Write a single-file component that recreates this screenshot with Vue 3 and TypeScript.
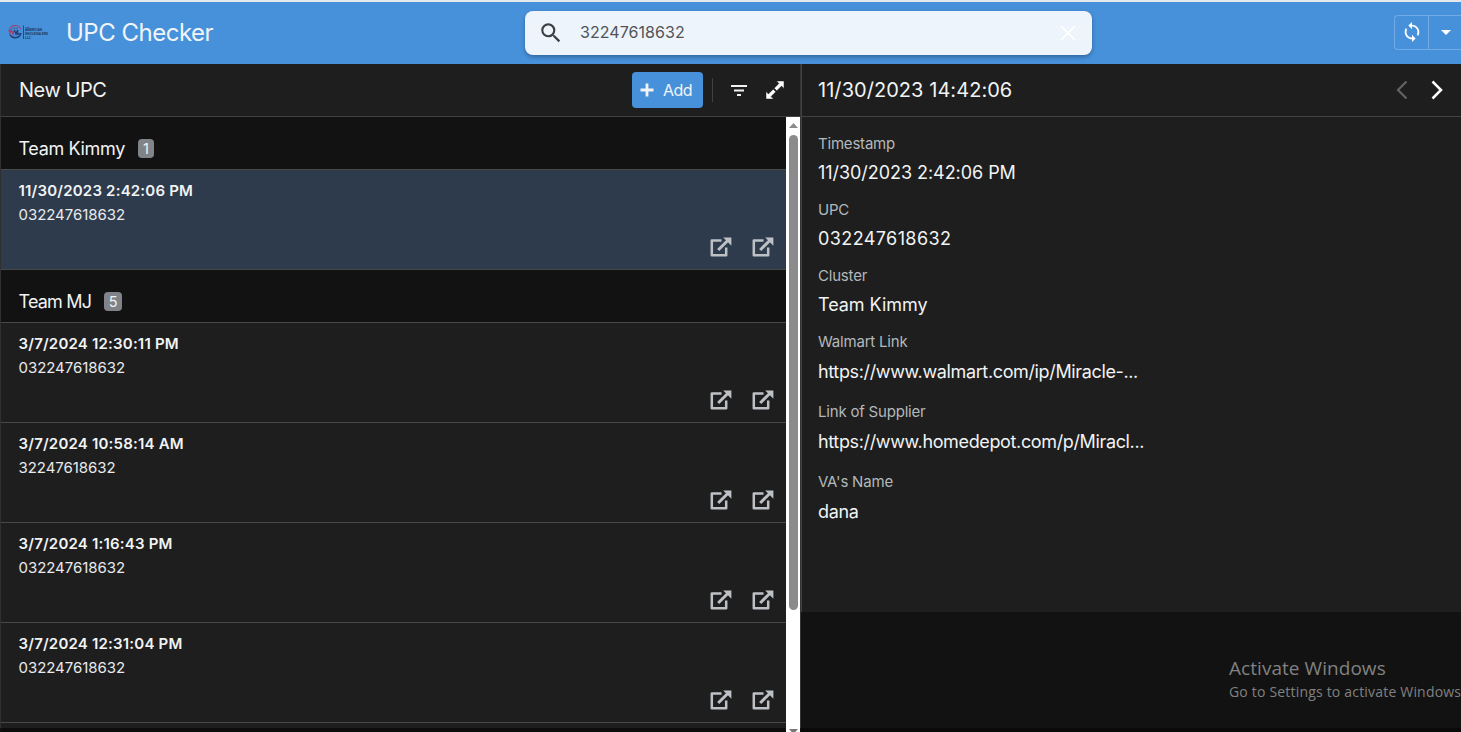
<script setup lang="ts">
interface Row { date: string; upc: string; selected?: boolean }
interface Group { name: string; count: number; tracking: number; rows: Row[] }
interface Field { label: string; value: string; kind: string }

const groups: Group[] = [
  {
    name: 'Team Kimmy',
    count: 1,
    tracking: -0.35,
    rows: [{ date: '11/30/2023 2:42:06 PM', upc: '032247618632', selected: true }],
  },
  {
    name: 'Team MJ',
    count: 5,
    tracking: -0.8,
    rows: [
      { date: '3/7/2024 12:30:11 PM', upc: '032247618632' },
      { date: '3/7/2024 10:58:14 AM', upc: '32247618632' },
      { date: '3/7/2024 1:16:43 PM', upc: '032247618632' },
      { date: '3/7/2024 12:31:04 PM', upc: '032247618632' },
      { date: '', upc: '' },
    ],
  },
]

const fields: Field[] = [
  { label: 'Timestamp', value: '11/30/2023 2:42:06 PM', kind: 'plain' },
  { label: 'UPC', value: '032247618632', kind: 'number' },
  { label: 'Cluster', value: 'Team Kimmy', kind: 'plain' },
  { label: 'Walmart Link', value: 'https://www.walmart.com/ip/Miracle-...', kind: 'link' },
  { label: 'Link of Supplier', value: 'https://www.homedepot.com/p/Miracl...', kind: 'link' },
  { label: "VA's Name", value: 'dana', kind: 'link' },
]
</script>

<template>
  <div class="app">
    <header class="topbar">
      <svg class="logo" width="42" height="18" viewBox="0 0 42 18">
        <path d="M1.2 9A6 6 0 0 1 12.8 6.4" fill="none" stroke="#a83a6c" stroke-width="1.2" />
        <path d="M1.8 11.5A6 6 0 0 0 13 10" fill="none" stroke="#1f3c72" stroke-width="1.3" />
        <path d="M1.5 11 3.3 7 5 11 6.4 7" fill="none" stroke="#a43b70" stroke-width="1.4" />
        <path d="M6.4 7 8 11 9.6 7V11H12.6" fill="none" stroke="#244079" stroke-width="1.4" />
        <path d="M4.5 5.2H10" stroke="#315f9d" />
        <path d="M15.5 2.5V16" stroke="#234a7c" />
        <text x="17" y="4.6" class="logo-small">THE</text>
        <text x="17" y="8.4" class="logo-text" textLength="17" lengthAdjust="spacingAndGlyphs">AMERICAN</text>
        <text x="17" y="11.9" class="logo-text" textLength="23" lengthAdjust="spacingAndGlyphs">WHOLESALERS</text>
        <text x="17" y="15.6" class="logo-text" textLength="6" lengthAdjust="spacingAndGlyphs">LLC</text>
      </svg>
      <h1>UPC Checker</h1>
      <div class="search">
        <svg class="search-icon" width="26" height="26" viewBox="0 0 24 24" fill="#3c4043"><path d="M15.5 14h-.79l-.28-.27A6.471 6.471 0 0 0 16 9.5 6.5 6.5 0 1 0 9.5 16c1.61 0 3.09-.59 4.23-1.57l.27.28v.79l5 4.99L20.49 19l-4.99-5zm-6 0C7.01 14 5 11.99 5 9.5S7.01 5 9.5 5 14 7.01 14 9.5 11.99 14 9.5 14z" /></svg>
        <span class="query">32247618632</span>
        <svg class="clear" width="16" height="16" viewBox="0 0 16 16"><path d="M1.2 1.2 14.8 14.8M14.8 1.2 1.2 14.8" stroke="#fff" stroke-width="1.8" /></svg>
      </div>
      <div class="sync">
        <span class="sync-main">
          <svg width="22" height="22" viewBox="0 0 24 24" fill="#fff"><path d="M12 4V1L8 5l4 4V6c3.31 0 6 2.69 6 6 0 1.01-.25 1.97-.7 2.8l1.46 1.46A7.93 7.93 0 0 0 20 12c0-4.42-3.58-8-8-8zm0 14c-3.31 0-6-2.69-6-6 0-1.01.25-1.97.7-2.8L5.24 7.74A7.93 7.93 0 0 0 4 12c0 4.42 3.58 8 8 8v3l4-4-4-4v3z" /></svg>
        </span>
        <span class="sync-more"><svg width="10" height="5" viewBox="0 0 10 5"><path d="M0 0H10L5 5Z" fill="#fff" /></svg></span>
      </div>
    </header>

    <main class="body">
      <section class="list">
        <div class="bar">
          <h2 class="view-name">New UPC</h2>
          <button class="add">
            <svg width="14" height="14" viewBox="0 0 14 14"><path d="M7 .5V13.5M.5 7H13.5" stroke="#f1f3f5" stroke-width="2.8" /></svg>
            <span>Add</span>
          </button>
          <i class="sep"></i>
          <svg class="filter" width="16" height="11" viewBox="0 0 16 11"><path d="M0 1H16M3 5.5H13M6 10H10" stroke="#f1f1f1" stroke-width="1.8" /></svg>
          <svg class="expand" width="20" height="20" viewBox="0 0 20 20"><path d="M11.5 1H19V8.5L16.6 6.1 11.8 10.8 9.2 8.2 13.9 3.4ZM8.2 9.2 10.8 11.8 6.1 16.6 8.5 19H1V11.5L3.4 13.9Z" fill="#fff" stroke="#1e1e1e" stroke-width=".5" /></svg>
        </div>
        <div class="scroll-area">
          <div class="rows">
            <template v-for="g in groups" :key="g.name">
              <div class="group"><span class="group-name" :style="{ letterSpacing: g.tracking + 'px' }">{{ g.name }}</span><span class="count">{{ g.count }}</span></div>
              <article v-for="(r, i) in g.rows" :key="i" class="row" :class="{ selected: r.selected }">
                <div class="date">{{ r.date }}</div>
                <div class="upc">{{ r.upc }}</div>
                <div class="actions">
                  <svg v-for="n in 2" :key="n" width="22" height="20" viewBox="0 0 22 20">
                    <path d="M11.5 3.4H1.8V18.2H16.2V10.5" fill="none" stroke="#bdc1c6" stroke-width="2.5" stroke-linejoin="round" />
                    <path d="M8.2 13 18 3.2" stroke="#bdc1c6" stroke-width="3" />
                    <path d="M13.2.6H21.4V8.8Z" fill="#bdc1c6" />
                  </svg>
                </div>
              </article>
            </template>
          </div>
          <div class="scrollbar">
            <svg class="arrow" width="9" height="5" viewBox="0 0 9 5"><path d="M0 5 4.5 0 9 5Z" fill="#8b8b8b" /></svg>
            <div class="thumb"></div>
            <svg class="arrow down" width="9" height="5" viewBox="0 0 9 5"><path d="M0 0H9L4.5 5Z" fill="#777" /></svg>
          </div>
        </div>
      </section>

      <section class="detail">
        <div class="panel">
          <div class="bar">
            <h2 class="detail-title">11/30/2023 14:42:06</h2>
            <svg class="nav" width="12" height="20" viewBox="0 0 12 20"><path d="M10.5 1.5 2 10 10.5 18.5" fill="none" stroke="#636363" stroke-width="2.2" /></svg>
            <svg class="nav" width="12" height="20" viewBox="0 0 12 20"><path d="M1.5 1.5 10 10 1.5 18.5" fill="none" stroke="#fff" stroke-width="2.5" /></svg>
          </div>
          <dl class="fields">
            <div v-for="f in fields" :key="f.label" :class="['field', f.kind]">
              <dt>{{ f.label }}</dt>
              <dd>{{ f.value }}</dd>
            </div>
          </dl>
        </div>
      </section>
    </main>
    <aside class="activation">
      <div class="activation-title">Activate Windows</div>
      <div class="activation-text">Go to Settings to activate Windows.</div>
    </aside>
    <div class="bottom-edge"></div>
  </div>
</template>

<style>
body { margin: 0; overflow: hidden; }
</style>

<style scoped>
* { box-sizing: border-box; }
.app { position: relative; width: 1461px; height: 732px; overflow: hidden; display: flex; flex-direction: column; background: #121212; color: #f1f3f4; font-family: Inter, "Liberation Sans", sans-serif; white-space: nowrap; }
svg { display: block; flex: none; }
h1, h2, dl, dd { margin: 0; font-weight: 400; }
.topbar { flex: none; height: 64px; display: flex; align-items: center; background: #4791db; border-top: 2px solid #e4e9ed; padding: 0 0 2px 8px; }
.logo { margin-right: 16px; }
.logo-text { font: bold 3.6px "Liberation Sans", sans-serif; fill: #18365e; }
.logo-small { font: bold 2px "Liberation Sans", sans-serif; fill: #18365e; }
h1 { width: 459px; font-size: 24px; line-height: 30px; padding-top: 1px; letter-spacing: -.5px; color: #f0f4f8; }
.search { width: 567px; height: 44px; margin-top: 1px; border-radius: 8px; background: #edf4fc; box-shadow: 0 2px 4px rgba(0, 0, 0, .3); display: flex; align-items: center; padding: 0 16px 0 13px; }
.search-icon { margin-right: 16px; }
.query { font-size: 16px; letter-spacing: .05px; color: #505357; padding-bottom: 1px; }
.clear { margin-left: auto; }
.sync { margin-left: 302px; width: 67px; height: 35px; border: 1px solid #72aae5; border-right: 0; border-radius: 4px 0 0 4px; display: flex; flex: none; }
.sync-main { width: 34px; border-right: 1px solid #72aae5; display: flex; align-items: center; justify-content: center; }
.sync-more { flex: 1; display: flex; align-items: center; justify-content: center; padding-left: 1px; }
.body { flex: 1; min-height: 0; display: flex; }
.list { width: 800px; border-left: 1px solid #303030; display: flex; flex-direction: column; background: #1e1e1e; }
.bar { height: 53px; flex: none; display: flex; align-items: center; background: #1e1e1e; border-bottom: 1px solid #424242; }
.view-name { font-size: 20px; letter-spacing: -.45px; margin-left: 18px; flex: 1; }
.add { width: 71px; height: 36px; padding: 0 0 1px 8px; border: 0; border-radius: 4px; background: #4791db; color: #f1f3f4; display: flex; align-items: center; gap: 9px; font: 400 16px Inter, sans-serif; letter-spacing: -.6px; }
.sep { width: 1px; height: 24px; background: #414141; margin: 0 18px 0 9px; }
.filter { margin-right: 18px; }
.expand { margin-right: 15px; }
.scroll-area { flex: 1; min-height: 0; display: flex; }
.rows { flex: 1; overflow: hidden; }
.group { height: 53px; background: #121212; border-bottom: 1px solid #484848; display: flex; align-items: center; padding: 10px 0 0 17.5px; }
.group-name { font-size: 18px; }
.count { min-width: 16px; height: 19px; margin-left: 13px; padding: 0 4.5px; border-radius: 4px; background: #808489; font-size: 14.5px; line-height: 19px; text-align: center; }
.row { height: 100px; padding: 10px 12px 0 17.5px; background: #1e1e1e; border-bottom: 1px solid #484848; display: flex; flex-direction: column; }
.row.selected { background: #2e3b4c; }
.date { height: 22px; font-size: 15px; font-weight: 600; line-height: 22px; letter-spacing: .2px; }
.upc { height: 25px; font-size: 15px; line-height: 26px; letter-spacing: -.05px; color: #e8eaed; }
.actions { display: flex; justify-content: flex-end; gap: 20px; padding-top: 10px; }
.scrollbar { width: 14px; background: #fff; overflow: hidden; display: flex; flex-direction: column; align-items: center; }
.arrow { margin-top: 6px; flex: none; }
.thumb { width: 9px; height: 475px; margin-top: 7px; border-radius: 5px; background: #8b8b8b; flex: none; }
.arrow.down { margin-top: 119px; }
.detail { flex: 1; border-left: 1px solid #353535; }
.panel { height: 548px; background: #1e1e1e; border-left: 1px solid #424242; }
.detail-title { font-size: 20px; flex: 1; padding-left: 16px; letter-spacing: .05px; }
.nav { margin-right: 23px; }
.nav:last-child { margin-right: 18px; }
.fields { padding: 16px 16px 0; }
.field { height: 66px; }
.field.link { height: 70px; }
dt { font-size: 15px; line-height: 22px; color: #b3b8bb; letter-spacing: -.2px; }
dd { font-size: 18px; line-height: 26px; padding-top: 5px; letter-spacing: -.05px; }
.number dd { letter-spacing: .4px; }
.link dd { padding-top: 6px; letter-spacing: -.36px; }
.activation { position: absolute; left: 1229px; top: 656px; color: #818181; font-family: "Open Sans", sans-serif; }
.activation-title { font-size: 19px; line-height: 25px; letter-spacing: .05px; }
.activation-text { font-size: 14px; line-height: 21px; letter-spacing: .19px; }
.bottom-edge { position: absolute; left: 0; right: 0; bottom: 0; height: 4px; background: rgba(10, 8, 9, .75); clip-path: polygon(0 0, 786px 0, 786px 100%, 800px 100%, 800px 0, 100% 0, 100% 100%, 0 100%); }
</style>
